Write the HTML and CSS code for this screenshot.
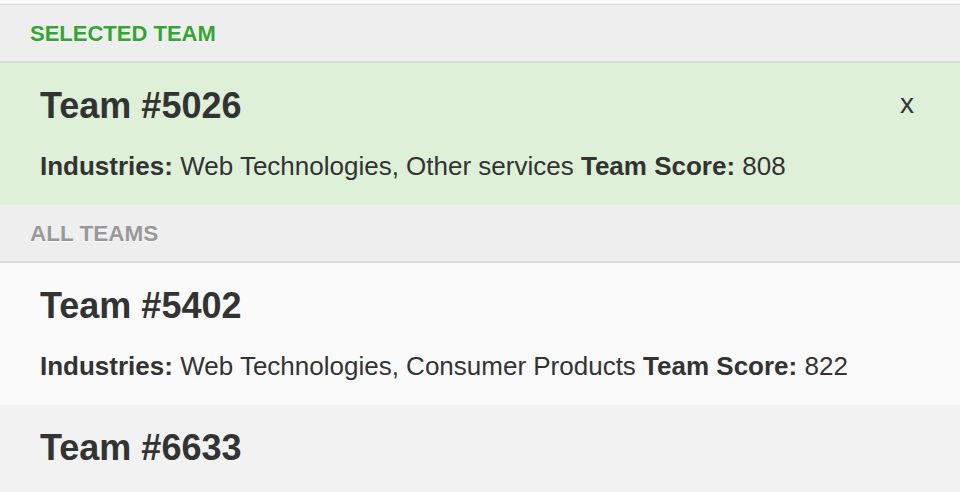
FILE: index.html
```html
<!DOCTYPE html>
<html>
<head>
<meta charset="utf-8">
<link rel="stylesheet" href="styles.css">
</head>
<body>
<div class="teams">
  <div class="top-strip"></div>
  <div class="section-header selected-label">SELECTED TEAM</div>
  <div class="team-card selected">
    <div class="team-title-row">
      <h3 class="team-title">Team #5026</h3>
      <span class="close">x</span>
    </div>
    <p class="team-details"><b>Industries:</b> Web Technologies, Other services <b>Team Score:</b> 808</p>
  </div>
  <div class="section-header all-label">ALL TEAMS</div>
  <div class="team-card light">
    <div class="team-title-row">
      <h3 class="team-title">Team #5402</h3>
    </div>
    <p class="team-details"><b>Industries:</b> Web Technologies, Consumer Products <b>Team Score:</b> 822</p>
  </div>
  <div class="team-card gray">
    <div class="team-title-row">
      <h3 class="team-title">Team #6633</h3>
    </div>
  </div>
</div>
</body>
</html>
```

FILE: styles.css
```css
html, body {
  margin: 0;
  padding: 0;
  height: 100%;
  overflow: hidden;
  background: #f2f2f2;
}
body {
  font-family: "Liberation Sans", Arial, Helvetica, sans-serif;
  color: #333;
}
.teams {
  display: flex;
  flex-direction: column;
}
.top-strip {
  height: 4px;
  background: #fafafa;
  border-bottom: 1px solid #dcdcdc;
}
.section-header {
  height: 58px;
  box-sizing: border-box;
  display: flex;
  align-items: center;
  padding: 2px 30px 0;
  background: #eeeeee;
  border-bottom: 2px solid #dcdcdc;
  font-size: 22px;
  font-weight: bold;
  text-shadow: 0 1px 0 #fff;
}
.selected-label {
  color: #33a532;
}
.all-label {
  color: #999999;
  font-size: 22.5px;
}
.team-card {
  padding: 23px 46px 24px 40px;
}
.team-card.selected {
  background: #dff0d8;
}
.team-card.light {
  background: #fafafa;
}
.team-card.gray {
  background: #f2f2f2;
}
.team-title-row {
  display: flex;
  justify-content: space-between;
  align-items: flex-start;
  margin-bottom: 25px;
}
.team-title {
  margin: 0;
  font-size: 36px;
  line-height: 40px;
  font-weight: bold;
}
.close {
  font-size: 28px;
  line-height: 30px;
  margin-top: 3px;
  color: #333;
}
.team-details {
  margin: 0;
  font-size: 26px;
  line-height: 30px;
}
.team-details b {
  font-weight: bold;
}
```
